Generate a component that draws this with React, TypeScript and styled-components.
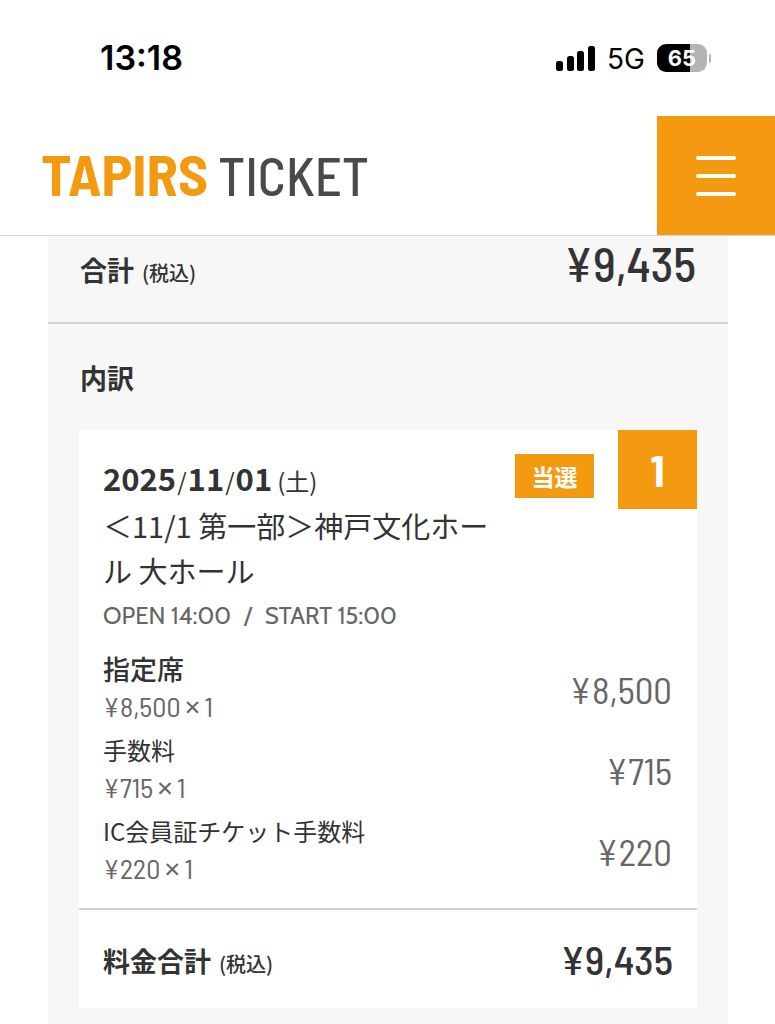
import React from 'react';
import styled, { createGlobalStyle } from 'styled-components';

const ORANGE = '#f49a10';
const INK = '#333333';
const JP = '"Noto Sans CJK JP", sans-serif';
const NARROW = '"Barlow Semi Condensed", "Roboto Condensed", "Liberation Sans Narrow", "Noto Sans CJK JP", sans-serif';

const GlobalStyle = createGlobalStyle`
  *, *::before, *::after { box-sizing: border-box; }
  body {
    margin: 0;
    background: #ffffff;
    color: ${INK};
    font-family: ${JP};
  }
`;

const StatusBar = styled.div`
  display: flex;
  align-items: center;
  justify-content: space-between;
  height: 116px;
  padding: 0 64px 0 100px;
  color: #000000;
  font-family: Inter, sans-serif;
`;

const Clock = styled.time`
  font-size: 34px;
  font-weight: 600;
  line-height: 40px;
`;

const StatusIcons = styled.div`
  display: flex;
  align-items: center;
  gap: 12px;
`;

const Network = styled.span`
  padding-top: 2px;
  font-size: 28px;
  line-height: 40px;
`;

const Battery = styled.div`
  display: flex;
  align-items: center;
  gap: 2px;
`;

const BatteryBody = styled.div`
  width: 50px;
  height: 28px;
  border-radius: 9px;
  background: linear-gradient(to right, #000000 65%, #b4b4b4 65%);
  color: #ffffff;
  font-size: 22px;
  font-weight: 700;
  line-height: 28px;
  text-align: center;
`;

const BatteryTip = styled.div`
  width: 2px;
  height: 9px;
  border-radius: 0 2px 2px 0;
  background: #b4b4b4;
`;

const Header = styled.header`
  display: flex;
  align-items: center;
  justify-content: space-between;
  height: 120px;
  padding-left: 41px;
  border-bottom: 1px solid #d4d4d4;
`;

const Logo = styled.a`
  display: flex;
  align-items: baseline;
  gap: 10px;
  padding-bottom: 4px;
  color: #4a4a4a;
  font-family: ${NARROW};
  font-size: 53px;
  font-weight: 500;
  line-height: 64px;
  text-decoration: none;
`;

const LogoStrong = styled.span`
  color: ${ORANGE};
  font-size: 58px;
  font-weight: 700;
`;

const MenuButton = styled.button`
  display: flex;
  flex-direction: column;
  align-items: center;
  justify-content: center;
  gap: 14px;
  width: 118px;
  height: 119px;
  padding: 0;
  border: 0;
  background: ${ORANGE};
`;

const MenuLine = styled.span`
  width: 40px;
  height: 4px;
  border-radius: 2px;
  background: #ffffff;
`;

const Panel = styled.main`
  margin: 0 47px 0 48px;
  padding-bottom: 16px;
  background: #f7f7f7;
`;

const TotalRow = styled.div<{ $card?: boolean }>`
  display: flex;
  align-items: ${p => (p.$card ? 'center' : 'flex-start')};
  justify-content: space-between;
  height: ${p => (p.$card ? 100 : 88)}px;
  padding: 0 ${p => (p.$card ? 24 : 32)}px;
  border-top: ${p => (p.$card ? '2px solid #d0d0d0' : '0')};
  border-bottom: ${p => (p.$card ? '0' : '2px solid #d0d0d0')};
`;

const TotalLabel = styled.h2<{ $card?: boolean }>`
  display: flex;
  align-items: baseline;
  gap: 8px;
  margin: ${p => (p.$card ? 6 : 14)}px 0 0;
  font-size: 27px;
  font-weight: 700;
  line-height: 40px;
`;

const TaxNote = styled.small`
  font-size: 20px;
  font-weight: 500;
`;

const TotalAmount = styled.span<{ $size: number }>`
  font-family: ${NARROW};
  font-size: ${p => p.$size}px;
  font-weight: 500;
  line-height: 54px;
`;

const Breakdown = styled.section`
  padding: 34px 31px 0;
`;

const BreakdownTitle = styled.h2`
  margin: 0 1px 32px;
  font-size: 27px;
  font-weight: 700;
  line-height: 40px;
`;

const Card = styled.article`
  background: #ffffff;
`;

const CardHead = styled.div`
  display: flex;
  align-items: flex-start;
  padding-left: 24px;
`;

const EventInfo = styled.div`
  flex: 1;
  padding: 25px 16px 0 0;
`;

const EventDate = styled.p`
  display: flex;
  align-items: baseline;
  gap: 1px;
  margin: 0;
  font-size: 31px;
  font-weight: 700;
  line-height: 45px;
`;

const Slash = styled.span`
  font-size: 24px;
  font-weight: 400;
`;

const Weekday = styled(Slash)`
  padding-left: 4px;
`;

const EventTitle = styled.h3`
  margin: 0;
  font-size: 29px;
  font-weight: 400;
  line-height: 45px;
`;

const EventTimes = styled.p`
  display: flex;
  gap: 13px;
  margin: 5px 0 0;
  color: #666666;
  font-family: Cabin, Lato, sans-serif;
  font-size: 24px;
  line-height: 36px;
  white-space: nowrap;
`;

const WonBadge = styled.span`
  width: 79px;
  margin: 24px 24px 0 0;
  background: ${ORANGE};
  color: #ffffff;
  font-size: 23px;
  font-weight: 700;
  line-height: 44px;
  text-align: center;
`;

const NumberBadge = styled.span`
  width: 79px;
  background: ${ORANGE};
  color: #ffffff;
  font-family: ${NARROW};
  font-size: 44px;
  font-weight: 700;
  line-height: 79px;
  text-align: center;
`;

const Items = styled.table`
  width: 100%;
  margin: 16px 0 15px;
  border-collapse: collapse;
`;

const ItemHead = styled.th`
  padding: 0 0 7px 24px;
  font-weight: 400;
  text-align: left;
`;

const ItemName = styled.div<{ $main?: boolean }>`
  font-size: ${p => (p.$main ? 27 : 24)}px;
  font-weight: ${p => (p.$main ? 500 : 400)};
  line-height: 38px;
`;

const ItemQty = styled.div`
  display: flex;
  gap: 4px;
  color: #666666;
  font-family: ${NARROW};
  font-size: 28px;
  line-height: 36px;
`;

const Times = styled.span`
  font-family: "Noto Sans", sans-serif;
`;

const ItemAmount = styled.td`
  padding: 0 25px 4px 0;
  color: #666666;
  font-family: ${NARROW};
  font-size: 37px;
  line-height: 48px;
  text-align: right;
`;

const items = [
  { name: '指定席', unit: '¥8,500', amount: '¥8,500', main: true },
  { name: '手数料', unit: '¥715', amount: '¥715' },
  { name: 'IC会員証チケット手数料', unit: '¥220', amount: '¥220' },
];

export default function App() {
  return (
    <>
      <GlobalStyle />
      <StatusBar>
        <Clock>13:18</Clock>
        <StatusIcons>
          <svg width="39" height="25" viewBox="0 0 39 25" aria-hidden="true">
            <rect x="0" y="15" width="7" height="10" rx="2.5" />
            <rect x="11" y="10" width="7" height="15" rx="2.5" />
            <rect x="21" y="5" width="7" height="20" rx="2.5" />
            <rect x="32" y="0" width="7" height="25" rx="2.5" />
          </svg>
          <Network>5G</Network>
          <Battery>
            <BatteryBody>65</BatteryBody>
            <BatteryTip />
          </Battery>
        </StatusIcons>
      </StatusBar>
      <Header>
        <Logo href="#">
          <LogoStrong>TAPIRS</LogoStrong>
          <span>TICKET</span>
        </Logo>
        <MenuButton aria-label="メニュー">
          <MenuLine />
          <MenuLine />
          <MenuLine />
        </MenuButton>
      </Header>
      <Panel>
        <TotalRow>
          <TotalLabel>
            合計<TaxNote>(税込)</TaxNote>
          </TotalLabel>
          <TotalAmount $size={48}>¥9,435</TotalAmount>
        </TotalRow>
        <Breakdown>
          <BreakdownTitle>内訳</BreakdownTitle>
          <Card>
            <CardHead>
              <EventInfo>
                <EventDate>
                  2025<Slash>/</Slash>11<Slash>/</Slash>01<Weekday>(土)</Weekday>
                </EventDate>
                <EventTitle>＜11/1 第一部＞神戸文化ホール 大ホール</EventTitle>
                <EventTimes>
                  <span>OPEN 14:00</span>
                  <span>/</span>
                  <span>START 15:00</span>
                </EventTimes>
              </EventInfo>
              <WonBadge>当選</WonBadge>
              <NumberBadge>1</NumberBadge>
            </CardHead>
            <Items>
              <tbody>
                {items.map(item => (
                  <tr key={item.name}>
                    <ItemHead scope="row">
                      <ItemName $main={item.main}>{item.name}</ItemName>
                      <ItemQty>
                        {item.unit}
                        <Times>×</Times>1
                      </ItemQty>
                    </ItemHead>
                    <ItemAmount>{item.amount}</ItemAmount>
                  </tr>
                ))}
              </tbody>
            </Items>
            <TotalRow $card>
              <TotalLabel $card>
                料金合計<TaxNote>(税込)</TaxNote>
              </TotalLabel>
              <TotalAmount $size={41}>¥9,435</TotalAmount>
            </TotalRow>
          </Card>
        </Breakdown>
      </Panel>
    </>
  );
}
